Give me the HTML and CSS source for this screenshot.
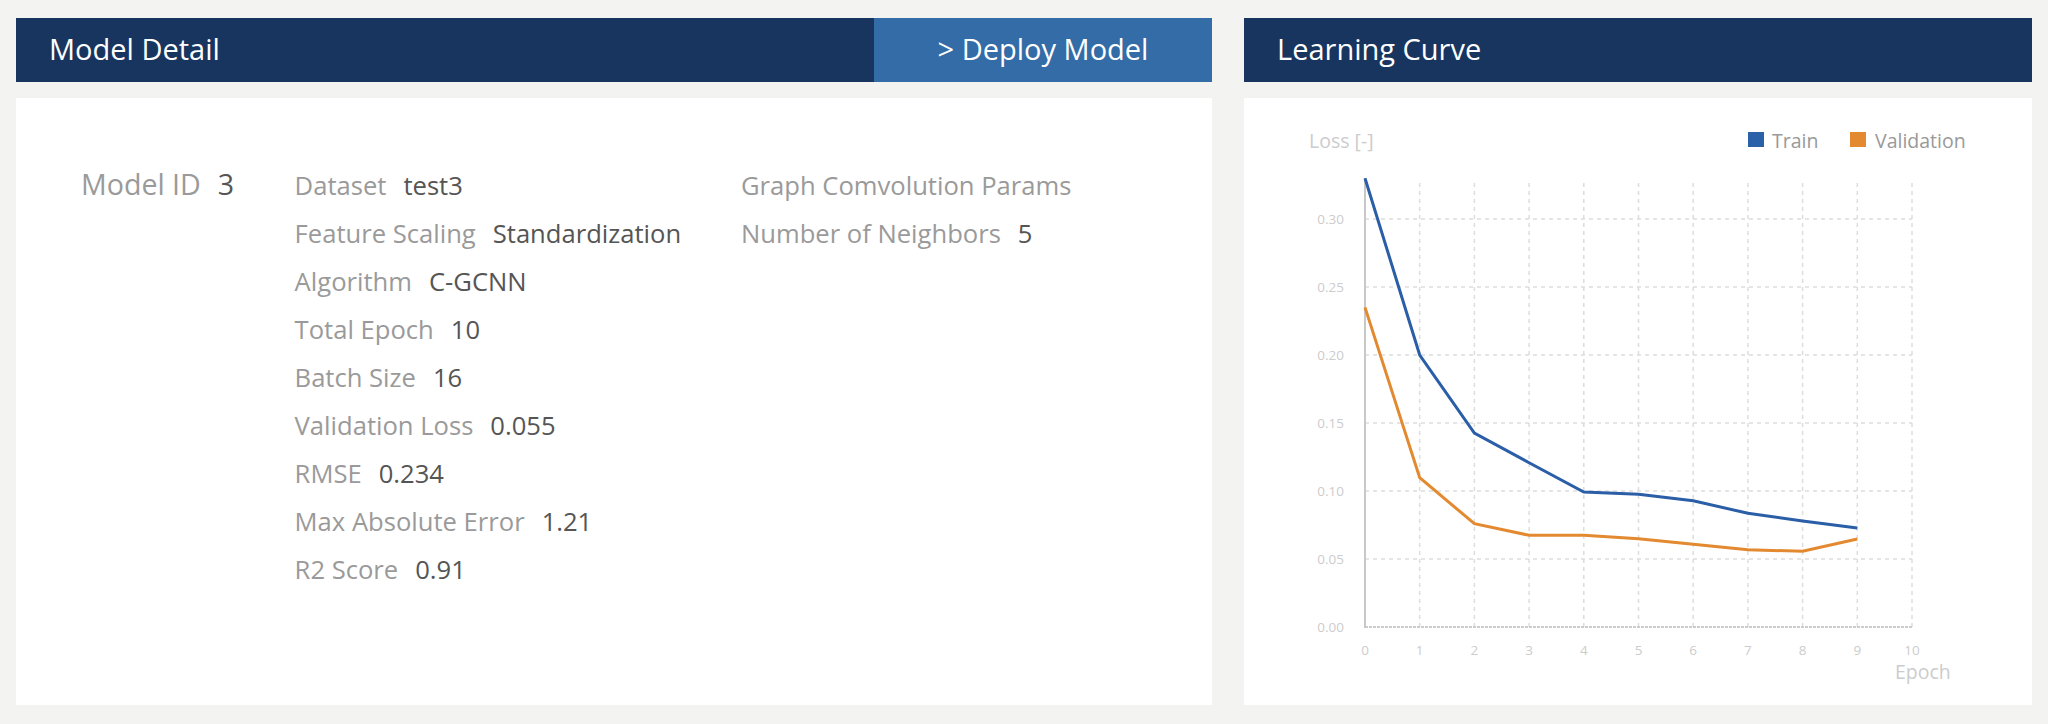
FILE: index.html
```html
<!DOCTYPE html>
<html lang="en">
<head>
<meta charset="utf-8">
<title>Model Detail</title>
<link rel="stylesheet" href="styles.css">
</head>
<body>
<div class="page">
  <section class="panel panel-detail">
    <header class="panel-head">
      <h2 class="panel-title">Model Detail</h2>
      <a class="deploy-btn" href="#">&gt; Deploy Model</a>
    </header>
    <div class="panel-body detail-body">
      <div class="col col-id">
        <div class="row"><span class="label id-label">Model ID</span><span class="value id-value">3</span></div>
      </div>
      <div class="col col-main">
        <div class="row"><span class="label">Dataset</span><span class="value">test3</span></div>
        <div class="row"><span class="label">Feature Scaling</span><span class="value">Standardization</span></div>
        <div class="row"><span class="label">Algorithm</span><span class="value">C-GCNN</span></div>
        <div class="row"><span class="label">Total Epoch</span><span class="value">10</span></div>
        <div class="row"><span class="label">Batch Size</span><span class="value">16</span></div>
        <div class="row"><span class="label">Validation Loss</span><span class="value">0.055</span></div>
        <div class="row"><span class="label">RMSE</span><span class="value">0.234</span></div>
        <div class="row"><span class="label">Max Absolute Error</span><span class="value">1.21</span></div>
        <div class="row"><span class="label">R2 Score</span><span class="value">0.91</span></div>
      </div>
      <div class="col col-params">
        <div class="row"><span class="label">Graph Comvolution Params</span></div>
        <div class="row"><span class="label">Number of Neighbors</span><span class="value">5</span></div>
      </div>
    </div>
  </section>

  <section class="panel panel-curve">
    <header class="panel-head">
      <h2 class="panel-title">Learning Curve</h2>
    </header>
    <div class="panel-body chart-body">
      <svg class="chart" viewBox="0 0 788 607" width="788" height="607" xmlns="http://www.w3.org/2000/svg">
        <text class="axis-title" x="65" y="50">Loss [-]</text>
        <rect x="504" y="34" width="16" height="15" fill="#2a61a8"/>
        <text class="legend-text" x="528" y="50">Train</text>
        <rect x="606" y="34" width="16" height="15" fill="#e3892f"/>
        <text class="legend-text" x="631" y="50">Validation</text>

        <g class="grid">
          <line x1="121" y1="121" x2="668" y2="121"/>
          <line x1="121" y1="189" x2="668" y2="189"/>
          <line x1="121" y1="257" x2="668" y2="257"/>
          <line x1="121" y1="325" x2="668" y2="325"/>
          <line x1="121" y1="393" x2="668" y2="393"/>
          <line x1="121" y1="461" x2="668" y2="461"/>
          <line x1="175.7" y1="85" x2="175.7" y2="529"/>
          <line x1="230.4" y1="85" x2="230.4" y2="529"/>
          <line x1="285.1" y1="85" x2="285.1" y2="529"/>
          <line x1="339.8" y1="85" x2="339.8" y2="529"/>
          <line x1="394.5" y1="85" x2="394.5" y2="529"/>
          <line x1="449.2" y1="85" x2="449.2" y2="529"/>
          <line x1="503.9" y1="85" x2="503.9" y2="529"/>
          <line x1="558.6" y1="85" x2="558.6" y2="529"/>
          <line x1="613.3" y1="85" x2="613.3" y2="529"/>
          <line x1="668" y1="85" x2="668" y2="529"/>
        </g>
        <line class="x-axis" x1="121" y1="529" x2="668" y2="529"/>
        <line class="y-axis" x1="121" y1="80" x2="121" y2="530"/>

        <g class="y-ticks">
          <text x="100" y="125.7">0.30</text>
          <text x="100" y="193.7">0.25</text>
          <text x="100" y="261.7">0.20</text>
          <text x="100" y="329.7">0.15</text>
          <text x="100" y="397.7">0.10</text>
          <text x="100" y="465.7">0.05</text>
          <text x="100" y="533.7">0.00</text>
        </g>
        <g class="x-ticks">
          <text x="121" y="557">0</text>
          <text x="175.7" y="557">1</text>
          <text x="230.4" y="557">2</text>
          <text x="285.1" y="557">3</text>
          <text x="339.8" y="557">4</text>
          <text x="394.5" y="557">5</text>
          <text x="449.2" y="557">6</text>
          <text x="503.9" y="557">7</text>
          <text x="558.6" y="557">8</text>
          <text x="613.3" y="557">9</text>
          <text x="668" y="557">10</text>
        </g>
        <text class="axis-title" x="651" y="581">Epoch</text>

        <polyline class="series series-train" points="121,80.2 175.7,257 230.4,335 285.1,364.7 339.8,394 394.5,396.3 449.2,402.7 503.9,415.3 558.6,423 613.3,430"/>
        <polyline class="series series-val" points="121,209.4 175.7,379.7 230.4,425.7 285.1,437.3 339.8,437.3 394.5,440.7 449.2,446.3 503.9,451.7 558.6,453.3 613.3,441"/>
      </svg>
    </div>
  </section>
</div>
</body>
</html>
```

FILE: styles.css
```css
* {
  box-sizing: border-box;
}

html, body {
  margin: 0;
  padding: 0;
  background: #f3f3f2;
}

body {
  font-family: "Open Sans", "Noto Sans", "Liberation Sans", sans-serif;
  width: 2048px;
  height: 724px;
  overflow: hidden;
}

.page {
  display: flex;
  gap: 32px;
  padding: 18px 16px 19px 16px;
  height: 724px;
}

.panel {
  display: flex;
  flex-direction: column;
  gap: 16px;
}

.panel-detail {
  width: 1196px;
  flex: none;
}

.panel-curve {
  flex: 1;
}

.panel-head {
  height: 64px;
  flex: none;
  background: #18355f;
  display: flex;
  align-items: stretch;
  justify-content: space-between;
}

.panel-title {
  margin: 0;
  padding: 0 0 3px 33px;
  font-size: 29px;
  font-weight: 400;
  color: #ffffff;
  display: flex;
  align-items: center;
}

.deploy-btn {
  width: 338px;
  background: #336ca6;
  color: #ffffff;
  text-decoration: none;
  font-size: 29px;
  padding-bottom: 3px;
  display: flex;
  align-items: center;
  justify-content: center;
}

.panel-body {
  flex: 1;
  background: #ffffff;
}

.detail-body {
  display: flex;
  align-items: baseline;
  padding: 62px 0 0 65px;
}

.col {
  display: flex;
  flex-direction: column;
}

.col-id {
  width: 213.6px;
}

.col-main {
  width: 446.4px;
}

.row {
  display: flex;
  align-items: baseline;
  gap: 17px;
  line-height: 48px;
  font-size: 25.6px;
  white-space: nowrap;
}

.label {
  color: #9a9a9a;
}

.value {
  color: #555555;
}

.id-label,
.id-value {
  font-size: 28.6px;
}

.chart-body {
  display: block;
}

.chart {
  display: block;
}

.axis-title {
  font-family: "Open Sans", sans-serif;
  font-size: 19.5px;
  fill: #cccccc;
}

.legend-text {
  font-family: "Open Sans", sans-serif;
  font-size: 19.5px;
  fill: #999999;
}

.grid line {
  stroke: #dddddd;
  stroke-width: 1.5;
  stroke-dasharray: 4 4;
}

.x-axis {
  stroke: #cccccc;
  stroke-width: 2;
  stroke-dasharray: 3 1;
}

.y-axis {
  stroke: #c8c8c8;
  stroke-width: 2;
}

.y-ticks text {
  font-family: "Open Sans", sans-serif;
  font-size: 13.5px;
  fill: #cccccc;
  text-anchor: end;
}

.x-ticks text {
  font-family: "Open Sans", sans-serif;
  font-size: 13.5px;
  fill: #cccccc;
  text-anchor: middle;
}

.series {
  fill: none;
  stroke-width: 3;
  stroke-linejoin: miter;
}

.series-train {
  stroke: #2a5ea6;
}

.series-val {
  stroke: #e3892f;
}
```
